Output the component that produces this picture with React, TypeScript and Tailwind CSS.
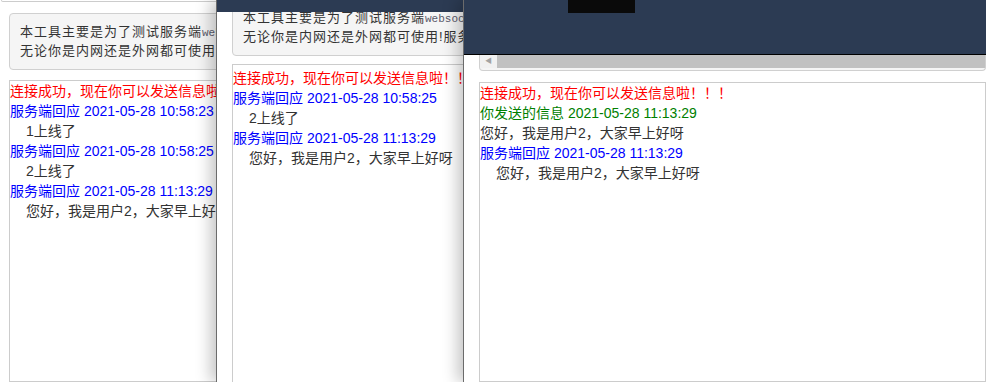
import React from "react";

type Line = { kind: "red" | "blue" | "green" | "plain" | "indent"; text: string; time?: string };

function MsgLine({ l }: { l: Line }) {
  if (l.kind === "red") return <div className="text-[#ff0000]">{l.text}</div>;
  if (l.kind === "blue")
    return (
      <div className="text-[#0000ff]">
        {l.text} {l.time}
      </div>
    );
  if (l.kind === "green")
    return (
      <div className="text-[#008000]">
        {l.text} {l.time}
      </div>
    );
  if (l.kind === "indent") return <div className="pl-[16px] text-[#333]">{l.text}</div>;
  return <div className="text-[#333]">{l.text}</div>;
}

function MsgBox({ lines, className }: { lines: Line[]; className: string }) {
  return (
    <div className={"h-[420px] whitespace-nowrap border border-[#cccccc] text-[14px] leading-[20px] " + className}>
      {lines.map((l, i) => (
        <MsgLine key={i} l={l} />
      ))}
    </div>
  );
}

function Well({ className }: { className: string }) {
  return (
    <div
      className={
        "whitespace-nowrap rounded-[4px] border border-[#d0d0d0] bg-[#f5f5f5] text-[13px] leading-[18px] tracking-[1px] text-[#333] " +
        className
      }
    >
      <div>
        本工具主要是为了测试服务端
        <span className="font-['Liberation_Mono','DejaVu_Sans_Mono',monospace] text-[11px] tracking-normal text-[#5a5a6a]">websocket</span>
        是否可用而开发的小工具
      </div>
      <div>无论你是内网还是外网都可使用!服务端地址请自行填写</div>
    </div>
  );
}

const red: Line = { kind: "red", text: "连接成功，现在你可以发送信息啦！！！" };
const hello = "您好，我是用户2，大家早上好呀";

export default function App() {
  return (
    <div className="relative h-[382px] w-[986px] overflow-hidden bg-white font-['Liberation_Sans','Noto_Sans_CJK_SC',sans-serif]">
      {/* Window 1 */}
      <div className="absolute left-0 top-0 flex h-full w-[420px] flex-col">
        <div className="ml-[1px] h-[3px] rounded-b-[3px] border-x border-b border-[#cccccc]" />
        <Well className="ml-[9px] mt-[11px] py-[9px] pl-[10px]" />
        <MsgBox
          className="ml-[9px] mt-[10px]"
          lines={[
            red,
            { kind: "blue", text: "服务端回应", time: "2021-05-28 10:58:23" },
            { kind: "indent", text: "1上线了" },
            { kind: "blue", text: "服务端回应", time: "2021-05-28 10:58:25" },
            { kind: "indent", text: "2上线了" },
            { kind: "blue", text: "服务端回应", time: "2021-05-28 11:13:29" },
            { kind: "indent", text: hello },
          ]}
        />
      </div>

      {/* Window 2 */}
      <div className="absolute left-[216px] top-0 h-full w-[280px] overflow-hidden border-l border-[#6b6b6b] bg-white shadow-[-6px_0_14px_rgba(0,0,0,0.22)]">
        <div className="flex flex-col">
          <Well className="ml-[15px] mt-[-1px] pb-[9px] pl-[10px] pt-[9px]" />
          <MsgBox
            className="ml-[15px] mt-[8px] pt-[3px]"
            lines={[
              red,
              { kind: "blue", text: "服务端回应", time: "2021-05-28 10:58:25" },
              { kind: "indent", text: "2上线了" },
              { kind: "blue", text: "服务端回应", time: "2021-05-28 11:13:29" },
              { kind: "indent", text: hello },
            ]}
          />
        </div>
        <div className="absolute left-0 right-0 top-0 h-[12px] bg-[#2c3b53]" />
      </div>

      {/* Window 3 */}
      <div className="absolute left-[463px] top-0 flex h-full w-[523px] flex-col border-l border-[#6b6b6b] bg-white shadow-[-6px_0_14px_rgba(0,0,0,0.22)]">
        <div className="relative h-[55px] shrink-0 border-b border-black bg-[#2c3b53]">
          <div className="absolute left-[104px] top-0 h-[13px] w-[67px] bg-[#0a0a0a]" />
        </div>
        <div className="ml-[15px] flex h-[16px] shrink-0 flex-col rounded-b-[4px] border-x border-b border-[#d0d0d0] bg-[#f5f5f5]">
          <div className="flex h-[13px]">
            <div className="flex w-[17px] items-center justify-center bg-[#f1f1f1] text-[7px] text-[#a3a3a3]">◀</div>
            <div className="flex-1 bg-[#c1c1c1]" />
          </div>
        </div>
        <MsgBox
          className="ml-[15px] mt-[11px]"
          lines={[
            red,
            { kind: "green", text: "你发送的信息", time: "2021-05-28 11:13:29" },
            { kind: "plain", text: hello },
            { kind: "blue", text: "服务端回应", time: "2021-05-28 11:13:29" },
            { kind: "indent", text: hello },
          ]}
        />
      </div>
    </div>
  );
}
